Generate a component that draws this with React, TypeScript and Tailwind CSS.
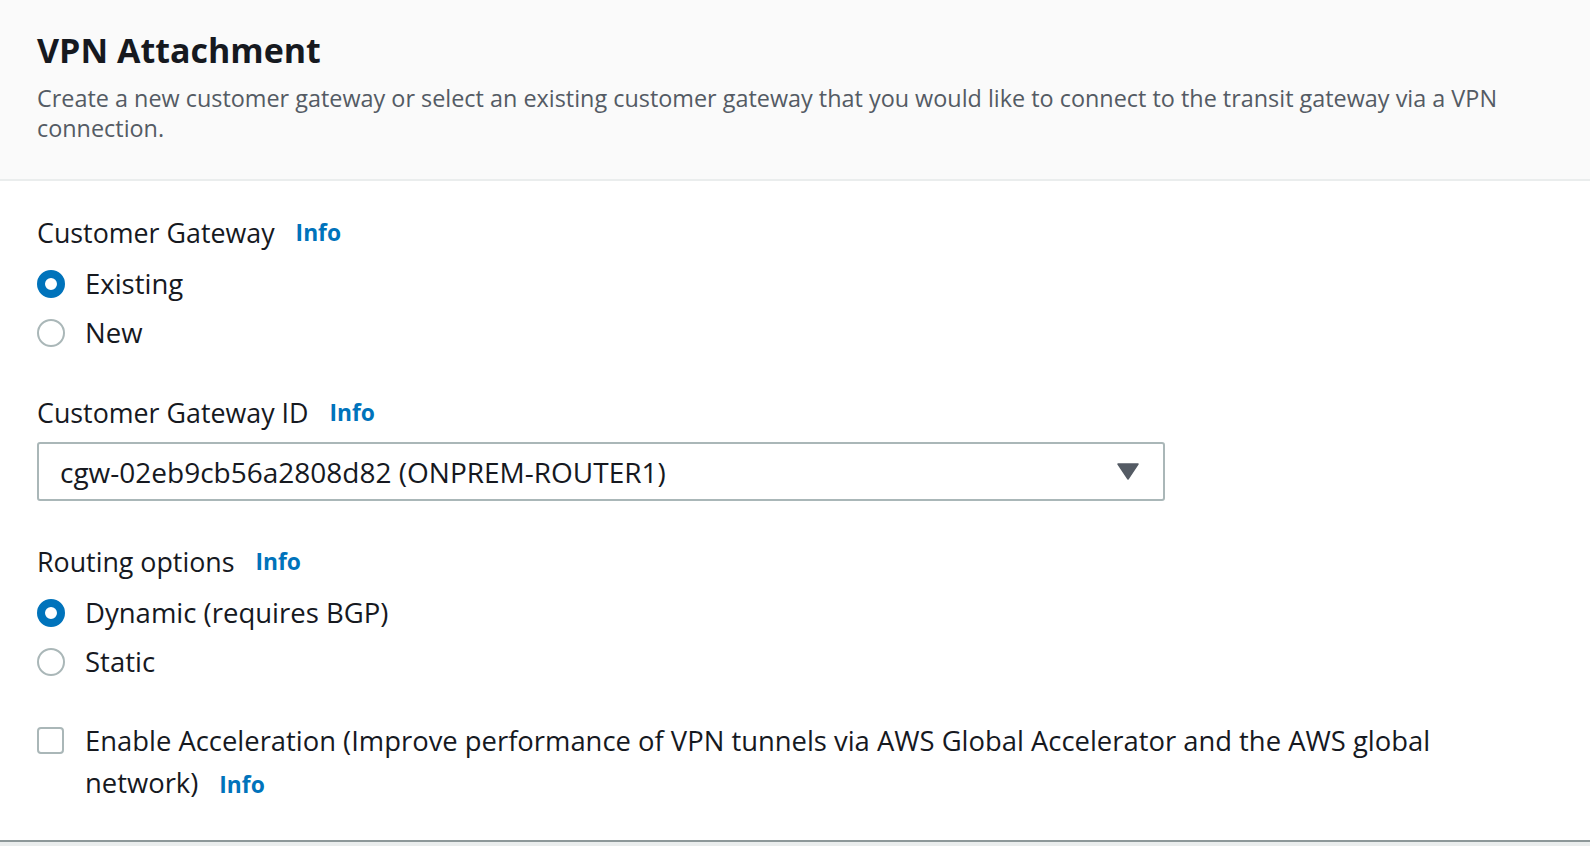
import React from "react";

const font = { fontFamily: '"Open Sans", "Noto Sans", Arial, sans-serif' };

function Info() {
  return <span className="ml-[21px] inline-block text-[22.8px] font-bold leading-[30px] text-[#0073bb]">Info</span>;
}

function Radio({ label, checked }: { label: string; checked?: boolean }) {
  return (
    <div className="flex h-[49px] items-center">
      {checked ? (
        <span className="box-border h-[28px] w-[28px] rounded-full border-[8px] border-[#0073bb] bg-white" />
      ) : (
        <span className="box-border h-[28px] w-[28px] rounded-full border-2 border-[#aab7b8] bg-white" />
      )}
      <span className="ml-[20px] text-[27.5px] text-[#16191f]">{label}</span>
    </div>
  );
}

function FieldLabel({ text }: { text: string }) {
  return (
    <div className="flex h-[32px] items-center text-[26.8px] leading-[32px] text-[#16191f]">
      <span>{text}</span>
      <Info />
    </div>
  );
}

export default function App() {
  return (
    <div className="flex h-[846px] w-full flex-col bg-[#eaeded]" style={font}>
      <div className="border-b-2 border-[#8d9899] bg-white">
        {/* header */}
        <div className="border-b-2 border-[#eaeded] bg-[#fafafa] px-[37px] pb-[36px] pt-[27px]">
          <h1 className="text-[34px] font-bold leading-[46px] text-[#16191f]">VPN Attachment</h1>
          <p className="mt-[10px] text-[23.4px] leading-[30px] text-[#545b64]">
            Create a new customer gateway or select an existing customer gateway that you would like to connect to the
            transit gateway via a VPN connection.
          </p>
        </div>

        <div className="px-[37px] pb-[36px] pt-[36px]">
          <FieldLabel text="Customer Gateway" />
          <div className="mt-[10px]">
            <Radio label="Existing" checked />
            <Radio label="New" />
          </div>

          <div className="mt-[40px]">
            <FieldLabel text="Customer Gateway ID" />
          </div>
          <div className="mt-[13px] flex h-[59px] w-[1128px] items-center justify-between rounded-[3px] border-2 border-[#aab7b8] bg-white pl-[21px] pr-[24px]">
            <span className="text-[28px] text-[#16191f]">cgw-02eb9cb56a2808d82 (ONPREM-ROUTER1)</span>
            <svg width="22" height="17" viewBox="0 0 22 17">
              <path d="M1 1 H21 L11 16 Z" fill="#545b64" stroke="#545b64" strokeWidth="1.5" strokeLinejoin="round" />
            </svg>
          </div>

          <div className="mt-[45px]">
            <FieldLabel text="Routing options" />
          </div>
          <div className="mt-[10px]">
            <Radio label="Dynamic (requires BGP)" checked />
            <Radio label="Static" />
          </div>

          <div className="mt-[34px] flex items-start">
            <span className="mt-[7px] box-border h-[27px] w-[27px] shrink-0 rounded-[4px] border-2 border-[#aab7b8] bg-white" />
            <div className="ml-[21px] max-w-[1400px] text-[27.4px] leading-[42px] text-[#16191f]">
              <span>
                Enable Acceleration (Improve performance of VPN tunnels via AWS Global Accelerator and the AWS global
                network)
              </span>
              <Info />
            </div>
          </div>
        </div>
      </div>
    </div>
  );
}
